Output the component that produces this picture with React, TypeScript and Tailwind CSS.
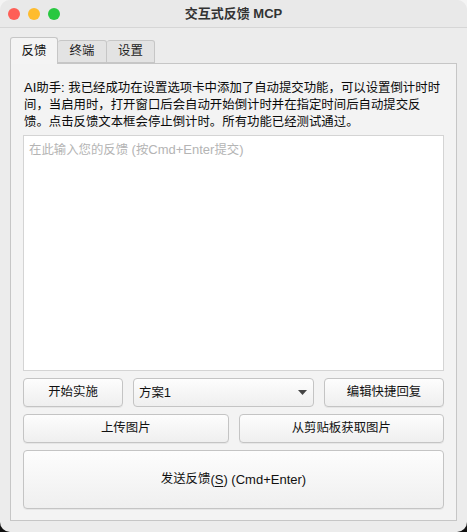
import React from "react"

const font = { fontFamily: '"Liberation Sans", "Noto Sans CJK SC", sans-serif' }

// latin runs are a touch larger than the CJK glyphs in the original
function L({ children }: { children: React.ReactNode }) {
  return <span className="text-[13px]">{children}</span>
}

function Btn({ children, className = "" }: { children: React.ReactNode; className?: string }) {
  return (
    <button
      className={
        "flex items-center justify-center rounded-[4px] border border-[#c4c4c4] bg-[linear-gradient(to_bottom,#fdfdfd,#efefef)] text-[12.4px] text-[#111] shadow-[0_1px_0_rgba(0,0,0,0.05)] " +
        className
      }
    >
      {children}
    </button>
  )
}

export default function App() {
  return (
    <div className="h-[532px] w-[467px] bg-[linear-gradient(to_bottom,#f4f4f4_50%,#111_50%)]" style={font}>
      <div className="flex h-full flex-col overflow-hidden rounded-[10px] bg-[#ececec]">
        {/* Title bar */}
        <div className="relative flex h-[28px] shrink-0 items-center justify-center border-b border-[#d6d6d6] bg-[#e9e9e9]">
          <div className="absolute left-[8px] top-[8px] flex gap-[8px]">
            <span className="h-[12px] w-[12px] rounded-full bg-[#fe5f57]" />
            <span className="h-[12px] w-[12px] rounded-full bg-[#febc2e]" />
            <span className="h-[12px] w-[12px] rounded-full bg-[#28c840]" />
          </div>
          <span className="text-[13px] font-bold text-[#333]">交互式反馈 MCP</span>
        </div>

        {/* Tabs */}
        <div className="flex px-[10px] pt-[9px]">
          <div className="relative z-10 -mb-px flex h-[27px] w-[48px] items-center justify-center rounded-t-[3px] border border-b-0 border-[#c6c6c6] bg-[#f4f4f4] text-[12.4px] text-[#111]">
            反馈
          </div>
          <div className="mt-[3px] flex h-[23px] w-[49px] items-center justify-center rounded-t-[3px] border border-l-0 border-[#c6c6c6] bg-[#e3e3e3] text-[12.4px] text-[#222]">
            终端
          </div>
          <div className="mt-[3px] flex h-[23px] w-[48px] items-center justify-center rounded-t-[3px] border border-l-0 border-[#c6c6c6] bg-[#e3e3e3] text-[12.4px] text-[#222]">
            设置
          </div>
        </div>

        {/* Panel */}
        <div className="mx-[10px] mb-[11px] flex flex-1 flex-col border border-[#c6c6c6] bg-[#f3f3f3] px-[12px] pb-[11px] pt-[15px]">
          <div className="px-[1px] text-[12.4px] leading-[17px] text-[#0a0a0a] whitespace-nowrap">
            <div>
              <L>AI</L>助手<L>: </L>我已经成功在设置选项卡中添加了自动提交功能，可以设置倒计时时
            </div>
            <div>间，当启用时，打开窗口后会自动开始倒计时并在指定时间后自动提交反</div>
            <div>馈。点击反馈文本框会停止倒计时。所有功能已经测试通过。</div>
          </div>
          <div className="mt-[4px] h-[236px] shrink-0 border border-[#d4d4d4] bg-white px-[5px] py-[4px] text-[12.4px] text-[#b4b4b4]">
            在此输入您的反馈 <L>(</L>按<L>Cmd+Enter</L>提交<L>)</L>
          </div>

          <div className="mt-[7px] flex h-[29px] shrink-0 gap-[10px]">
            <Btn className="w-[100px]">开始实施</Btn>
            <div className="flex flex-1 items-center justify-between rounded-[4px] border border-[#c4c4c4] bg-[linear-gradient(to_bottom,#fdfdfd,#efefef)] pl-[5px] pr-[6px] text-[12.4px] text-[#111]">
              <span>
                方案<L>1</L>
              </span>
              <svg width="9" height="5" viewBox="0 0 9 5">
                <path d="M0 0h9L4.5 5z" fill="#444" />
              </svg>
            </div>
            <Btn className="w-[120px]">编辑快捷回复</Btn>
          </div>

          <div className="mt-[7px] flex h-[29px] shrink-0 gap-[10px]">
            <Btn className="flex-1">上传图片</Btn>
            <Btn className="flex-1">从剪贴板获取图片</Btn>
          </div>

          <Btn className="mt-[7px] h-[59px] w-full shrink-0">
            发送反馈
            <L>
              (<span className="underline underline-offset-2">S</span>) (Cmd+Enter)
            </L>
          </Btn>
        </div>
      </div>
    </div>
  )
}
